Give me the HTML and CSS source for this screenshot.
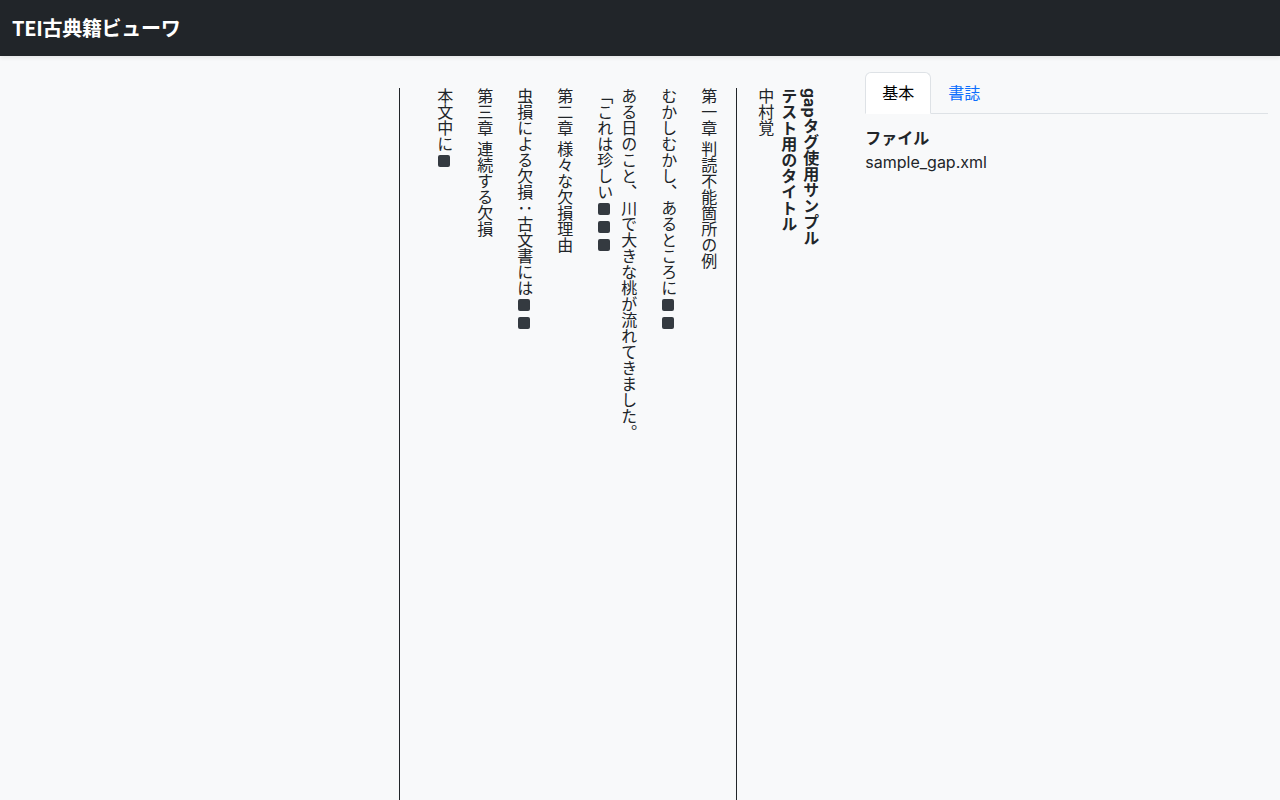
FILE: index.html
```html
<!DOCTYPE html>
<html lang="ja">
<head>
<meta charset="utf-8">
<title>TEI古典籍ビューワ</title>
<link rel="stylesheet" href="styles.css">
</head>
<body>
<nav class="navbar">
  <span class="brand">TEI古典籍ビューワ</span>
</nav>
<main class="main">
  <section class="col-left">
    <div class="viewer">
      <h1 class="doc-title">gapタグ使用サンプル<br>テスト用のタイトル</h1>
      <div class="doc-author">中村覚</div>
      <div class="doc-body">
        <p>第一章 判読不能箇所の例</p>
        <p>むかしむかし、あるところに<span class="gap"></span><span class="gap"></span></p>
        <p>ある日のこと、川で大きな桃が流れてきました。<br>「これは珍しい<span class="gap"></span><span class="gap"></span><span class="gap"></span></p>
        <p>第二章 様々な欠損理由</p>
        <p>虫損による欠損：古文書には<span class="gap"></span><span class="gap"></span></p>
        <p>第三章 連続する欠損</p>
        <p>本文中に<span class="gap"></span></p>
      </div>
    </div>
  </section>
  <aside class="col-right">
    <ul class="tabs">
      <li class="tab active">基本</li>
      <li class="tab">書誌</li>
    </ul>
    <div class="tab-content">
      <div class="field-label">ファイル</div>
      <div class="field-value">sample_gap.xml</div>
    </div>
  </aside>
</main>
</body>
</html>
```

FILE: styles.css
```css
* {
  box-sizing: border-box;
}

html, body {
  margin: 0;
  padding: 0;
}

body {
  background: #f8f9fa;
  color: #212529;
  font-family: Inter, "Noto Sans CJK JP", sans-serif;
  font-size: 16px;
  line-height: 24px;
  overflow: hidden;
  height: 100vh;
}

.navbar {
  height: 56px;
  background: #212529;
  display: flex;
  align-items: center;
  padding: 0 12px;
  box-shadow: 0 2px 4px rgba(0, 0, 0, 0.075);
  position: relative;
  z-index: 1;
}

.brand {
  color: #fff;
  font-size: 20px;
  font-weight: 700;
  line-height: 30px;
  font-family: "Noto Sans CJK JP", sans-serif;
  letter-spacing: -0.3px;
}

.main {
  display: flex;
  padding-top: 16px;
}

.col-left {
  width: 66.6667%;
  padding: 0 12px;
}

.col-right {
  width: 33.3333%;
  padding: 0 12px;
}

.viewer {
  display: flex;
  flex-direction: row-reverse;
  align-items: flex-start;
  padding-top: 16px;
  padding-right: 20px;
}

.doc-title {
  writing-mode: vertical-rl;
  margin: 0;
  font-size: 16px;
  font-weight: 700;
  line-height: 22px;
}

.doc-author {
  writing-mode: vertical-rl;
  line-height: 24px;
  margin-left: 16px;
}

.doc-body {
  writing-mode: vertical-rl;
  height: calc(100vh - 88px);
  border-left: 1px solid #212529;
  border-right: 1px solid #212529;
  padding: 0 16px;
}

.doc-body p {
  margin: 0 0 0 16px;
  line-height: 24px;
}

.gap {
  display: inline-block;
  width: 12px;
  height: 12px;
  margin: 3px 0 3px 0;
  background: #343a40;
  border-radius: 2px;
  vertical-align: 0;
}

.tabs {
  list-style: none;
  margin: 0;
  padding: 0;
  display: flex;
  border-bottom: 1px solid #dee2e6;
}

.tab {
  padding: 8px 16px;
  line-height: 24px;
  color: #0d6efd;
  border: 1px solid transparent;
  border-top-left-radius: 6px;
  border-top-right-radius: 6px;
  margin-bottom: -1px;
}

.tab.active {
  color: #000;
  background: #fff;
  border-color: #dee2e6 #dee2e6 #fff;
}

.tab-content {
  padding-top: 12px;
}

.field-label {
  font-weight: 700;
  line-height: 24px;
}

.field-value {
  line-height: 24px;
}
```
